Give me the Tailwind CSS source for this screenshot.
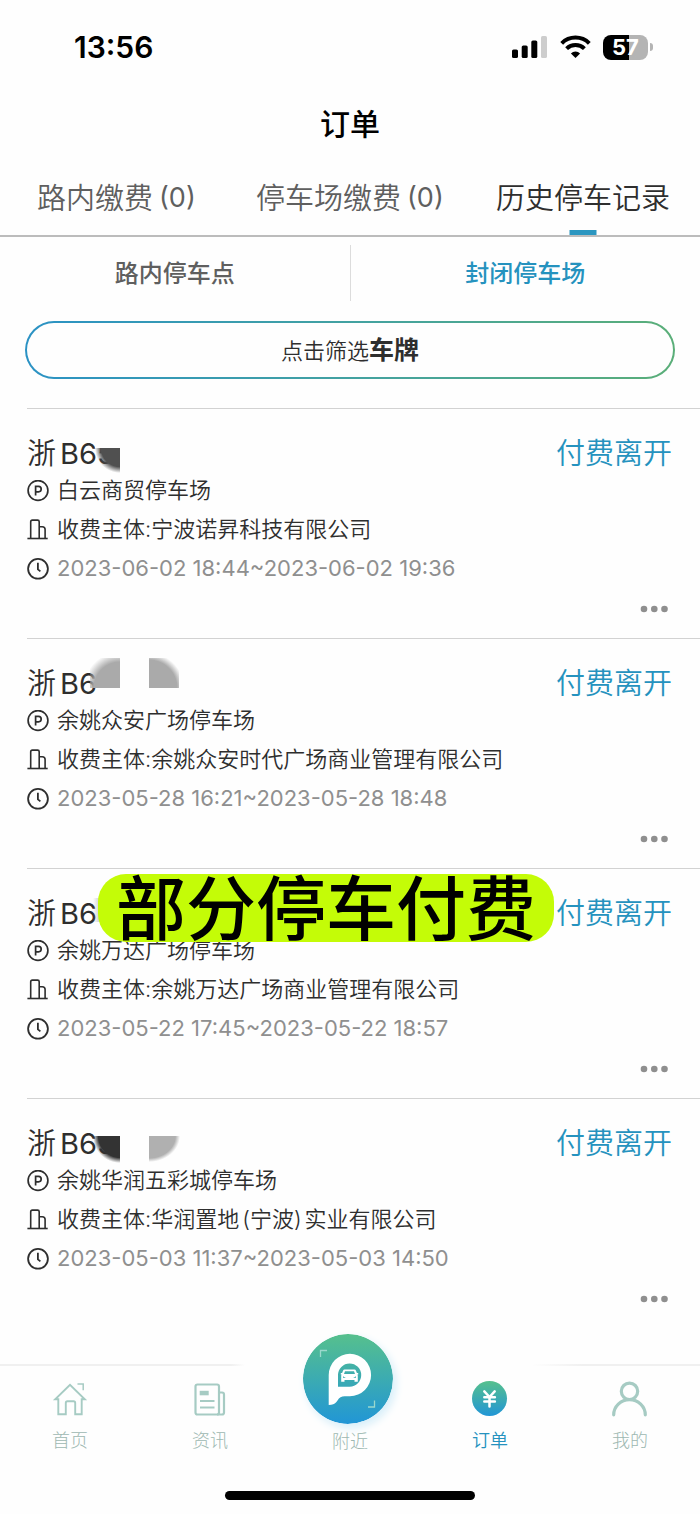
<!DOCTYPE html>
<html lang="zh-CN">
<head>
<meta charset="utf-8">
<meta name="viewport" content="width=device-width, initial-scale=1">
<title>订单</title>
<script src="https://cdn.jsdelivr.net/npm/@tailwindcss/browser@4"></script>
</head>
<body class="min-h-screen bg-[#fefefe] font-['Inter','Noto_Sans_CJK_SC',sans-serif] text-[#2e2e2e]">

<svg class="absolute size-0" aria-hidden="true">
  <defs>
    <linearGradient id="brand" x1="0" y1="0" x2="0" y2="1">
      <stop offset="0" stop-color="#56c08d"/><stop offset="1" stop-color="#2196d6"/>
    </linearGradient>
    <symbol id="i-park" viewBox="0 0 22 22"><g fill="none" stroke="#2e2e2e" stroke-width="1.7"><circle cx="11" cy="10.500" r="9.9"/><path d="M8.600 15.500V6.400h2.900a2.700 2.700 0 0 1 0 5.400H8.600"/></g></symbol>
    <symbol id="i-org" viewBox="0 0 22 22"><g fill="none" stroke="#2e2e2e" stroke-width="1.600"><path d="M3.700 19.200V2.700q0-1.600 1.600-1.600h5.300q1.600 0 1.600 1.600v16.500"/><path d="M12.200 7.700h3.100q2.800 0 2.800 2.800v8.700"/><path d="M.4 19.500h20.300"/></g></symbol>
    <symbol id="i-time" viewBox="0 0 22 22"><g fill="none" stroke="#2e2e2e" stroke-width="1.800"><circle cx="11" cy="10.800" r="9.900"/><path d="M10.900 4.800v6.600l2.500 2"/></g></symbol>
    <symbol id="i-more" viewBox="0 0 34 22"><g fill="#8f8f8f"><circle cx="6" cy="11" r="3.300"/><circle cx="16.300" cy="11" r="3.300"/><circle cx="26.500" cy="11" r="3.300"/></g></symbol>
  </defs>
</svg>

<header>
  <div class="flex h-[94px] items-center justify-between pl-[74px] pr-[47px]">
    <time class="text-[30px] font-semibold text-black">13:56</time>
    <div class="flex items-center">
      <svg class="h-[24px] w-[36px]" viewBox="0 0 36 24" aria-label="信号"><rect x="0" y="14.500" width="6" height="8.500" rx="1.600"/><rect x="9.700" y="10.500" width="6" height="12.500" rx="1.600"/><rect x="19.300" y="5.500" width="6" height="17.500" rx="1.600"/><rect x="29" y="1" width="6" height="22" rx="1.600" fill="#cdcdcd"/></svg>
      <svg class="ml-3 h-[24px] w-[31px]" viewBox="0 0 31 24" fill="none" stroke="#000" stroke-width="4" aria-label="无线网络"><path d="M1.700 8.300a19.600 19.600 0 0 1 27.600 0"/><path d="M6.600 13.600a12.700 12.700 0 0 1 17.800 0"/><path d="M15.500 23l-4.600-4.600a6.600 6.600 0 0 1 9.200 0z" fill="#000" stroke="none"/></svg>
      <div class="ml-3 flex h-[25px] w-[45px] items-center justify-center rounded-lg bg-linear-to-r from-black from-[57%] to-[#b4b4b4] to-[57%] text-[22px] font-bold leading-none text-white">57</div>
      <span class="ml-0.5 h-2 w-[3px] rounded-r-full bg-[#b4b4b4]"></span>
    </div>
  </div>
  <h1 class="flex h-[60px] items-center justify-center text-[30px] font-medium text-black">订单</h1>
  <div role="tablist" class="flex h-[83px] items-center justify-between border-b-2 border-[#bcbcbc] pl-[37px] pr-[30px] text-[29px] font-[350] text-[#5f5f5f]">
    <button role="tab" class="flex h-full items-center gap-1.5 pt-2">路内缴费<span class="text-[27px] font-normal">(0)</span></button>
    <button role="tab" class="ml-2 flex h-full items-center gap-1.5 pt-2">停车场缴费<span class="text-[27px] font-normal">(0)</span></button>
    <button role="tab" aria-selected="true" class="relative flex h-full items-center pt-2 text-[#2e2e2e]">历史停车记录<span class="absolute bottom-0 left-1/2 h-[5px] w-[27px] -translate-x-1/2 bg-[#2b96c0]"></span></button>
  </div>
</header>

<main>
  <div role="tablist" class="flex h-[72px] items-center text-[24px] font-medium text-[#5f5f5f]">
    <button role="tab" class="flex-1 pt-0.5">路内停车点</button>
    <span class="h-14 w-px bg-[#dcdcdc]"></span>
    <button role="tab" aria-selected="true" class="flex-1 pt-0.5 text-[#2592be]">封闭停车场</button>
  </div>
  <div class="px-[25px] pt-3 pb-[29px]">
    <div class="rounded-full bg-linear-to-r from-[#2b92c4] to-[#5aae78] p-0.5">
      <button class="flex h-[54px] w-full items-center justify-center rounded-full bg-[#fefefe] pt-0.5 text-[22px] font-[350]">点击筛选<b class="text-[25px] font-bold">车牌</b></button>
    </div>
  </div>

  <article class="relative ml-[27px] border-t border-[#d2d2d2] pt-[28px] pb-2 text-[22px] font-[350]">
    <div class="flex h-[34px] items-center justify-between pr-[28px] text-[29px]">
      <h2 class="flex gap-1"><span>浙</span><span class="font-normal">B65</span></h2>
      <span class="text-[#2592be]">付费离开</span>
    </div>
    <span class="absolute top-[25px] left-[68px] h-[14px] w-[26px] bg-[#fefefe]"></span>
    <span class="absolute top-[39px] left-[68px] h-[25px] w-[25px] bg-[radial-gradient(farthest-side_at_100%_0%,#505050_75%,transparent)]"></span>
    <p class="flex h-[39px] items-center gap-2"><svg class="size-[22px]"><use href="#i-park"/></svg>白云商贸停车场</p>
    <p class="flex h-[39px] items-center gap-2"><svg class="size-[22px]"><use href="#i-org"/></svg>收费主体:宁波诺昇科技有限公司</p>
    <p class="flex h-[39px] items-center gap-2 font-normal text-[#8f8f8f]"><svg class="size-[22px]"><use href="#i-time"/></svg>2023-06-02 18:44~2023-06-02 19:36</p>
    <div class="flex h-[42px] items-center justify-end pr-7"><button aria-label="更多"><svg class="h-[22px] w-[34px]"><use href="#i-more"/></svg></button></div>
  </article>

  <article class="relative ml-[27px] border-t border-[#d2d2d2] pt-[28px] pb-2 text-[22px] font-[350]">
    <div class="flex h-[34px] items-center justify-between pr-[28px] text-[29px]">
      <h2 class="flex gap-1"><span>浙</span><span class="font-normal">B6</span></h2>
      <span class="text-[#2592be]">付费离开</span>
    </div>
    <span class="absolute top-[19px] left-[63px] size-[30px] bg-[radial-gradient(circle_at_100%_100%,#aaa_26px,transparent_36px)]"></span>
    <span class="absolute top-[19px] left-[122px] size-[30px] bg-[radial-gradient(circle_at_0%_100%,#aaa_28px,transparent_35px)]"></span>
    <p class="flex h-[39px] items-center gap-2"><svg class="size-[22px]"><use href="#i-park"/></svg>余姚众安广场停车场</p>
    <p class="flex h-[39px] items-center gap-2"><svg class="size-[22px]"><use href="#i-org"/></svg>收费主体:余姚众安时代广场商业管理有限公司</p>
    <p class="flex h-[39px] items-center gap-2 font-normal text-[#8f8f8f]"><svg class="size-[22px]"><use href="#i-time"/></svg>2023-05-28 16:21~2023-05-28 18:48</p>
    <div class="flex h-[42px] items-center justify-end pr-7"><button aria-label="更多"><svg class="h-[22px] w-[34px]"><use href="#i-more"/></svg></button></div>
  </article>

  <article class="relative ml-[27px] border-t border-[#d2d2d2] pt-[28px] pb-2 text-[22px] font-[350]">
    <div class="flex h-[34px] items-center justify-between pr-[28px] text-[29px]">
      <h2 class="flex gap-1"><span>浙</span><span class="font-normal">B6</span></h2>
      <span class="text-[#2592be]">付费离开</span>
    </div>
    <span class="absolute top-[29px] left-[66px] h-6 w-3 bg-linear-to-r from-transparent to-[#aaa]"></span>
    <p class="flex h-[39px] items-center gap-2"><svg class="size-[22px]"><use href="#i-park"/></svg>余姚万达广场停车场</p>
    <p class="flex h-[39px] items-center gap-2"><svg class="size-[22px]"><use href="#i-org"/></svg>收费主体:余姚万达广场商业管理有限公司</p>
    <p class="flex h-[39px] items-center gap-2 font-normal text-[#8f8f8f]"><svg class="size-[22px]"><use href="#i-time"/></svg>2023-05-22 17:45~2023-05-22 18:57</p>
    <div class="flex h-[42px] items-center justify-end pr-7"><button aria-label="更多"><svg class="h-[22px] w-[34px]"><use href="#i-more"/></svg></button></div>
    <strong class="absolute top-[5px] left-[71px] flex h-[68px] items-center rounded-[28px] bg-[#c4fc07] px-[18px] pt-1 text-[70px] leading-none font-medium whitespace-nowrap text-black">部分停车付费</strong>
  </article>

  <article class="relative ml-[27px] border-t border-[#d2d2d2] pt-[28px] pb-2 text-[22px] font-[350]">
    <div class="flex h-[34px] items-center justify-between pr-[28px] text-[29px]">
      <h2 class="flex gap-1"><span>浙</span><span class="font-normal">B65</span></h2>
      <span class="text-[#2592be]">付费离开</span>
    </div>
    <span class="absolute top-[25px] left-[68px] h-[12px] w-[26px] bg-[#fefefe]"></span>
    <span class="absolute top-[37px] left-[66px] h-[27px] w-[27px] bg-[radial-gradient(farthest-side_at_100%_0%,#333_80%,transparent)]"></span>
    <span class="absolute top-[37px] left-[122px] h-[26px] w-[31px] bg-[radial-gradient(farthest-side_at_0%_0%,#b0b0b0_85%,transparent)]"></span>
    <p class="flex h-[39px] items-center gap-2"><svg class="size-[22px]"><use href="#i-park"/></svg>余姚华润五彩城停车场</p>
    <p class="flex h-[39px] items-center gap-2"><svg class="size-[22px]"><use href="#i-org"/></svg><span>收费主体:华润置地<span class="mx-[3px]">(宁波)</span>实业有限公司</span></p>
    <p class="flex h-[39px] items-center gap-2 font-normal text-[#8f8f8f]"><svg class="size-[22px]"><use href="#i-time"/></svg>2023-05-03 11:37~2023-05-03 14:50</p>
    <div class="flex h-[42px] items-center justify-end pr-7"><button aria-label="更多"><svg class="h-[22px] w-[34px]"><use href="#i-more"/></svg></button></div>
  </article>
</main>

<footer class="pt-9">
  <div class="h-0.5 bg-linear-to-r from-[#f0f0f0] from-[33%] via-transparent via-[35%] to-transparent to-[76%]">
    <div class="ml-auto h-full w-[24%] bg-linear-to-r from-transparent to-[#f0f0f0] to-30%"></div>
  </div>
  <nav class="grid h-[88px] grid-cols-5 text-[18px] leading-6 font-light text-[#9db8b1]">
    <a href="#home" class="flex flex-col items-center gap-3 pt-[15px]">
      <svg class="size-9" viewBox="0 0 36 36" fill="none" stroke="#a6cbc3" stroke-width="1.900"><path d="M6.300 18.200H3.200L18 3.800l14.800 14.400h-3.100v15.100h-6.500V21.900q0-1.600-1.600-1.600h-6.200q-1.600 0-1.600 1.600v11.400H6.300z"/><path d="M25.500 3h5.700v6.200" stroke-width="1.500"/></svg>首页</a>
    <a href="#news" class="flex flex-col items-center gap-3 pt-[15px]">
      <svg class="size-9" viewBox="0 0 36 36" fill="none" stroke="#a6cbc3" stroke-width="2.200"><rect x="3.500" y="3.500" width="23.500" height="30" rx="2"/><path d="M27 11.500h3q2 0 2 2v18q0 2-2 2h-5"/><path d="M8 20h14.500M8 26.500h14.500"/><rect x="7.700" y="9.800" width="9" height="4.500" fill="#a6cbc3" stroke="none"/></svg>资讯</a>
    <a href="#near" class="-mt-8 flex flex-col items-center">
      <svg class="-ml-1 size-[90px] rounded-full shadow-[3px_4px_8px_#d6eef9]" viewBox="0 0 90 90"><circle cx="45" cy="45" r="45" fill="url(#brand)"/><path d="M17.500 23v-6.500H24M71.500 66.500V73H65" fill="none" stroke="#9bd8cc" stroke-width="1.300"/><path fill="#fff" fill-rule="evenodd" d="M25.700 71V41a21.200 21.200 0 1 1 21.200 21.200c-5 0-8.500-.3-11 2.300-2 2.200-2.500 6.500-10.200 6.500zM35 52.700h11.700a11.600 11.600 0 1 0-11.700-11.600z"/><path fill="#fff" fill-rule="evenodd" d="M41.600 35.500h9.800q1.200 0 1.600 1.200l.9 2.300h1.300v1.500h-.8q.4.600.4 1.500v5.800h-3.300v-1.800h-10v1.800h-3.300V42q0-.9.400-1.500h-.8V39h1.300l.9-2.300q.4-1.200 1.600-1.200zM42 37.200l-1 2.700h11l-1-2.700zM40 42.300v1.400l2.800.3zM53 42.300v1.400l-2.800.3z"/></svg>
      <span class="mt-1.5">附近</span></a>
    <a href="#orders" aria-current="page" class="flex flex-col items-center gap-3 pt-[15px] font-[350] text-[#2592be]">
      <svg class="size-9" viewBox="0 0 36 36"><circle cx="17.500" cy="17.500" r="17.500" fill="url(#brand)"/><path d="M12.300 10.300l5.200 5.700 5.200-5.700M12.300 16.300h10.600M12.300 20.500h10.600M17.500 16v9.500" fill="none" stroke="#fff" stroke-width="2.500" stroke-linecap="round"/></svg>订单</a>
    <a href="#me" class="flex flex-col items-center gap-3 pt-[15px]">
      <svg class="size-9" viewBox="0 0 36 36" fill="none" stroke="#a6cbc3" stroke-width="3.200" stroke-linecap="round"><circle cx="17.500" cy="10.300" r="8.200"/><path d="M1.700 33.800a15.800 15.200 0 0 1 31.600 0"/></svg>我的</a>
  </nav>
  <div class="mx-auto mt-[37px] mb-[14px] h-[9px] w-[250px] rounded-full bg-black"></div>
</footer>
</body>
</html>
